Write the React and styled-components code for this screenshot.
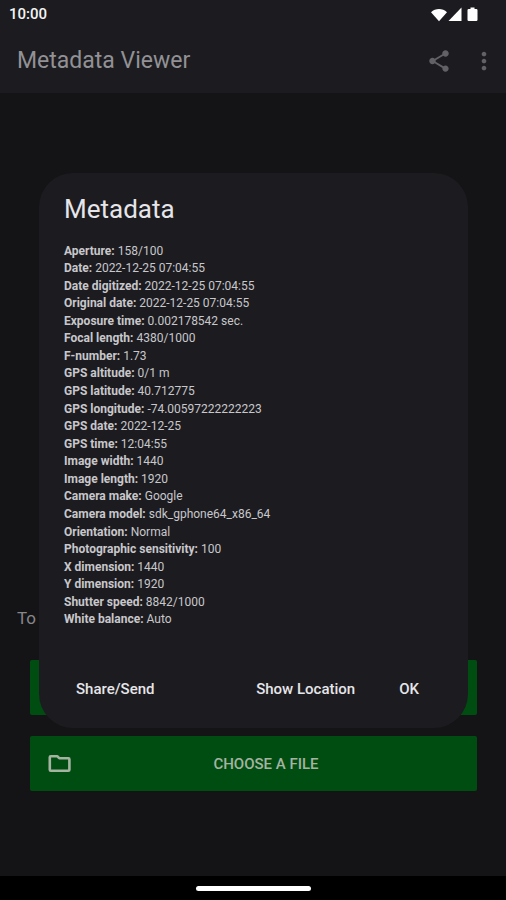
import React from 'react'
import styled, { createGlobalStyle } from 'styled-components'

const PAGE_COLOR = '#141416'
const SURFACE_COLOR = '#1c1c20'
const GREEN_COLOR = '#004d12'

const GlobalStyle = createGlobalStyle`
    * {
        box-sizing: border-box;
    }
    body {
        margin: 0;
        background-color: ${PAGE_COLOR};
        font-family: Roboto, "Liberation Sans", sans-serif;
    }
    button {
        font-family: inherit;
        border: none;
        padding: 0;
        background: none;
        cursor: pointer;
    }
`
const Screen = styled.div`
    display: flex;
    flex-direction: column;
    min-height: 100vh;
    background-color: ${PAGE_COLOR};
`
const StatusBar = styled.div`
    display: flex;
    justify-content: space-between;
    align-items: center;
    height: 28px;
    padding: 0 26px 0 9px;
    background-color: ${SURFACE_COLOR};
    color: #f4f4f4;
    font-size: 15px;
    font-weight: 500;
`
const AppBar = styled.header`
    display: flex;
    justify-content: space-between;
    align-items: center;
    height: 65px;
    padding: 0 8px 0 17px;
    background-color: ${SURFACE_COLOR};

    h1{
        margin: 0;
        color: #929195;
        font-size: 23px;
        font-weight: 400;
    }
`
const Actions = styled.div`
    display: flex;
    align-items: center;
    gap: 18px;
`
const IconButton = styled.button`
    display: flex;
    color: #626165;
`
const Main = styled.main`
    display: flex;
    flex: 1;
    flex-direction: column;
    justify-content: flex-end;
    padding: 0 29px 85px 30px;
`
const Hint = styled.p`
    margin: 0 0 31px -13px;
    color: #87868a;
    font-size: 17px;
    line-height: 22px;
`
const ButtonList = styled.div`
    display: flex;
    flex-direction: column;
    gap: 21px;
`
const FileButton = styled.button`
    display: grid;
    grid-template-columns: 24px 1fr;
    align-items: center;
    height: 55px;
    padding: 0 17px 0 18px;
    border-radius: 2px;
    background-color: ${GREEN_COLOR};
    color: #a5b3a1;
    font-size: 15px;
    font-weight: 500;
`
const NavigationBar = styled.footer`
    display: flex;
    justify-content: center;
    align-items: center;
    height: 24px;
    background-color: #000;
`
const Handle = styled.div`
    width: 115px;
    height: 5px;
    border-radius: 3px;
    background-color: #fff;
`
const Overlay = styled.div`
    position: fixed;
    inset: 0;
    display: grid;
    align-items: center;
    padding: 0 38px 0 39px;
`
const Dialog = styled.section`
    padding: 20px 25px 17px;
    border-radius: 34px;
    background-color: ${SURFACE_COLOR};
    color: #c8c7cb;

    h2{
        margin: 0 0 18px;
        color: #e6e5e9;
        font-size: 26px;
        font-weight: 400;
        line-height: 32px;
    }
`
const MetadataList = styled.dl`
    display: grid;
    align-content: space-between;
    min-height: 386px;
    margin: 0 0 38px;
    font-size: 12px;
    line-height: 17px;
`
const MetadataRow = styled.div`
    dt{
        display: inline;
        font-weight: 700;
    }
    dd{
        display: inline;
        margin: 0;
    }
`
const DialogActions = styled.div`
    display: flex;
    align-items: center;
    gap: 20px;
    padding: 0 12px;
`
const TextButton = styled.button`
    height: 44px;
    padding: 0 ${props => props.$wide ? '12px' : '0'};
    margin-right: ${props => props.$start ? 'auto' : '0'};
    color: #e6e5e9;
    font-size: 15px;
    font-weight: 500;
`

const metadata = [
    ['Aperture', '158/100'],
    ['Date', '2022-12-25 07:04:55'],
    ['Date digitized', '2022-12-25 07:04:55'],
    ['Original date', '2022-12-25 07:04:55'],
    ['Exposure time', '0.002178542 sec.'],
    ['Focal length', '4380/1000'],
    ['F-number', '1.73'],
    ['GPS altitude', '0/1 m'],
    ['GPS latitude', '40.712775'],
    ['GPS longitude', '-74.00597222222223'],
    ['GPS date', '2022-12-25'],
    ['GPS time', '12:04:55'],
    ['Image width', '1440'],
    ['Image length', '1920'],
    ['Camera make', 'Google'],
    ['Camera model', 'sdk_gphone64_x86_64'],
    ['Orientation', 'Normal'],
    ['Photographic sensitivity', '100'],
    ['X dimension', '1440'],
    ['Y dimension', '1920'],
    ['Shutter speed', '8842/1000'],
    ['White balance', 'Auto'],
]

const StatusIcons = () => (
    <svg width='50' height='18' viewBox='0 0 50 18' fill='#fff' aria-hidden='true'>
        <path d='M1 7.2C5.5 3 12.500 3 17 7.200L9 16.200Z' />
        <path d='M31.500 2.500v13.500H18.500Z' />
        <path d='M40.500 2.500h4v1.500h1.800q1.200 0 1.200 1.200v9.600q0 1.200-1.200 1.200h-7.600q-1.200 0-1.200-1.200V5.200q0-1.200 1.200-1.200h1.800Z' />
    </svg>
)

const ShareIcon = () => (
    <svg width='26' height='26' viewBox='0 0 24 24' fill='currentColor' aria-hidden='true'>
        <path d='M18 16.08c-.76 0-1.44.3-1.96.77L8.91 12.7c.05-.23.09-.46.09-.7s-.04-.47-.09-.7l7.05-4.11c.54.5 1.25.81 2.04.81 1.66 0 3-1.34 3-3s-1.34-3-3-3-3 1.34-3 3c0 .24.04.47.09.7L8.04 9.81C7.5 9.31 6.79 9 6 9c-1.66 0-3 1.34-3 3s1.34 3 3 3c.79 0 1.5-.31 2.04-.81l7.12 4.16c-.05.21-.08.43-.08.65 0 1.61 1.31 2.92 2.92 2.92s2.92-1.31 2.92-2.92-1.31-2.92-2.92-2.92z' />
    </svg>
)

const MoreIcon = () => (
    <svg width='28' height='28' viewBox='0 0 24 24' fill='currentColor' aria-hidden='true'>
        <path d='M12 8c1.1 0 2-.9 2-2s-.9-2-2-2-2 .9-2 2 .9 2 2 2zm0 2c-1.1 0-2 .9-2 2s.9 2 2 2 2-.9 2-2-.9-2-2-2zm0 6c-1.1 0-2 .9-2 2s.9 2 2 2 2-.9 2-2-.9-2-2-2z' />
    </svg>
)

const FolderIcon = () => (
    <svg width='24' height='24' viewBox='0 0 24 24' fill='none' stroke='currentColor' strokeWidth='2.6' strokeLinejoin='round' aria-hidden='true'>
        <path d='M1.800 6V17.800q0 1 1 1h17.600q1 0 1-1V7.200q0-1-1-1H11.200L9.200 4.200H2.800q-1 0-1 1Z' />
    </svg>
)

export default () => {
    return (
        <>
            <GlobalStyle />
            <Screen>
                <StatusBar>
                    <span>10:00</span>
                    <StatusIcons />
                </StatusBar>
                <AppBar>
                    <h1>Metadata Viewer</h1>
                    <Actions>
                        <IconButton type='button' aria-label='Share'><ShareIcon /></IconButton>
                        <IconButton type='button' aria-label='More options'><MoreIcon /></IconButton>
                    </Actions>
                </AppBar>
                <Main>
                    <Hint>To</Hint>
                    <ButtonList>
                        <FileButton type='button' aria-label='Choose a photo' />
                        <FileButton type='button'>
                            <FolderIcon />
                            <span>CHOOSE A FILE</span>
                        </FileButton>
                    </ButtonList>
                </Main>
                <NavigationBar>
                    <Handle />
                </NavigationBar>
            </Screen>
            <Overlay>
                <Dialog role='dialog' aria-labelledby='metadata-title'>
                    <h2 id='metadata-title'>Metadata</h2>
                    <MetadataList>
                        {metadata.map(([name, value]) => (
                            <MetadataRow key={name}>
                                <dt>{name}:</dt> <dd>{value}</dd>
                            </MetadataRow>
                        ))}
                    </MetadataList>
                    <DialogActions>
                        <TextButton type='button' $start>Share/Send</TextButton>
                        <TextButton type='button' $wide>Show Location</TextButton>
                        <TextButton type='button' $wide>OK</TextButton>
                    </DialogActions>
                </Dialog>
            </Overlay>
        </>
    )
}
